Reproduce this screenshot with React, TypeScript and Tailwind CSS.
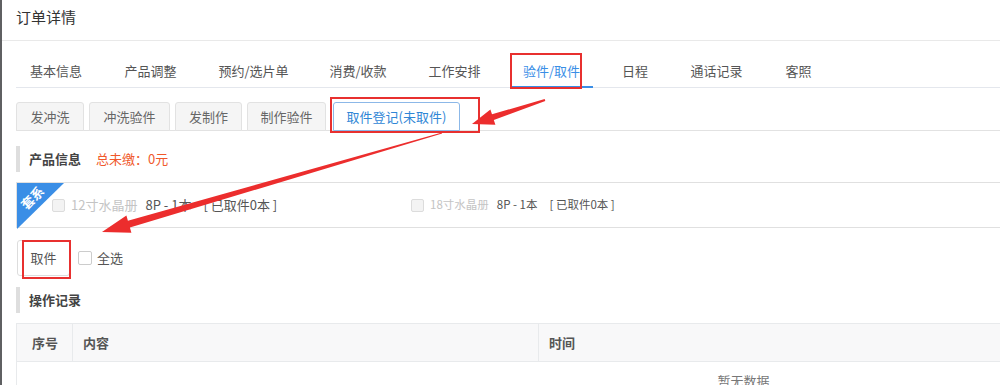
const mainTabs = [
  { label: "基本信息", w: "w-[78px]" },
  { label: "产品调整", w: "w-[79px]" },
  { label: "预约/选片单", w: "w-[95px]" },
  { label: "消费/收款", w: "w-[82px]" },
  { label: "工作安排", w: "w-[79px]" },
  { label: "验件/取件", w: "w-[83px]" },
  { label: "日程", w: "w-[52px]" },
  { label: "通话记录", w: "w-[79px]" },
  { label: "客照", w: "w-[53px]" },
];

const subTabs = [
  { label: "发冲洗", w: "w-[68px]" },
  { label: "冲洗验件", w: "w-[81px]" },
  { label: "发制作", w: "w-[67px]" },
  { label: "制作验件", w: "w-[79px]" },
];

function SectionTitle({ children }: { children: React.ReactNode }) {
  return (
    <div className="flex h-[26px] items-center gap-[15px] border-l-4 border-[#dedede] pl-[9px]">
      {children}
    </div>
  );
}

function ProductItem({ name, small }: { name: string; small?: boolean }) {
  return (
    <div
      className={`flex w-[359px] shrink-0 items-center ${small ? "text-[11.5px]" : "text-[13px]"}`}
    >
      <span className="h-[13px] w-[13px] rounded-[2px] border border-[#dcdcdc] bg-[#f3f3f3]" />
      <span className="ml-[6px] text-[#c4c4c4]">{name}</span>
      <span className="ml-[8px] text-[#555]">8P - 1本</span>
      <span className="ml-[12px] text-[#555]">[ 已取件0本 ]</span>
    </div>
  );
}

export default function App() {
  return (
    <div className="relative h-[385px] w-[1000px] overflow-hidden border-l-2 border-[#5f6062] bg-white font-['Noto_Sans_CJK_SC','Noto_Sans',sans-serif] text-[13px] text-[#555]">
      <div className="h-[41px] border-b border-[#e9e9e9] pl-[14px] pt-[7px] text-[15px] leading-[20px] text-[#333]">
        订单详情
      </div>

      <div className="pl-[14px]">
        {/* main tabs */}
        <div className="flex gap-[16px] border-b border-[#e4e7ed] pl-px pt-[14px]">
          {mainTabs.map((t) => (
            <div
              key={t.label}
              className={`-mb-px flex h-[33px] ${t.w} shrink-0 items-center justify-center border-b-2 ${
                t.label === "验件/取件" ? "border-[#3a8ee6] text-[#3a8ee6]" : "border-transparent"
              }`}
            >
              {t.label}
            </div>
          ))}
        </div>

        {/* sub tabs */}
        <div className="mt-[14px] flex items-end gap-[5px] border-b border-[#e2e2e2]">
          {subTabs.map((t) => (
            <div
              key={t.label}
              className={`-mb-px flex h-[29px] ${t.w} items-center justify-center rounded-t-[3px] border border-[#e2e2e2] bg-[#f5f5f5] text-[#666]`}
            >
              {t.label}
            </div>
          ))}
          <div className="-mb-px ml-[2px] flex h-[29px] w-[127px] items-center justify-center rounded-t-[3px] border border-[#8cb8e8] bg-white text-[#2f86d6]">
            取件登记(未取件)
          </div>
        </div>

        <div className="mt-[15px]">
          <SectionTitle>
            <span className="font-bold text-[#444]">产品信息</span>
            <span className="text-[#f0582b]">总未缴：0元</span>
          </SectionTitle>
        </div>

        {/* product box */}
        <div className="relative mt-[10px] flex h-[46px] items-center border border-r-0 border-[#e0e0e0] pl-[35px]">
          <div className="absolute left-0 top-0 h-[46px] w-[47px] bg-[#3a8ee6] [clip-path:polygon(0_0,100%_0,0_100%)]" />
          <span className="absolute left-[2px] top-[8px] -rotate-45 text-[13px] font-bold leading-none text-white">
            套系
          </span>
          <ProductItem name="12寸水晶册" />
          <ProductItem name="18寸水晶册" small />
        </div>

        {/* actions */}
        <div className="mt-[12px] flex items-center">
          <button className="ml-[1px] h-[36px] w-[53px] rounded-[3px] border border-[#dddddd] bg-white text-[13px] text-[#555]">
            取件
          </button>
          <span className="ml-[8px] h-[14px] w-[14px] rounded-[2px] border border-[#cccccc] bg-white" />
          <span className="ml-[5px] text-[#555]">全选</span>
        </div>

        <div className="mt-[11px]">
          <SectionTitle>
            <span className="font-bold text-[#444]">操作记录</span>
          </SectionTitle>
        </div>

        {/* log table */}
        <div className="mt-[10px] w-[1454px] border-l border-t border-[#e8eaec]">
          <div className="flex h-[37px] items-center bg-[#f8f8f9] font-bold text-[#555]">
            <div className="flex h-full w-[56px] items-center border-r border-[#e8eaec] pl-[15px]">序号</div>
            <div className="flex h-full w-[466px] items-center border-r border-[#e8eaec] pl-[10px]">内容</div>
            <div className="flex h-full flex-1 items-center pl-[10px]">时间</div>
          </div>
          <div className="border-t border-[#e8eaec] pt-[11px] text-center leading-[16px] text-[#777]">
            暂无数据
          </div>
        </div>
      </div>

      {/* annotations */}
      <div className="pointer-events-none absolute left-[508px] top-[53px] h-[36px] w-[72px] border-2 border-[#e8302f]" />
      <div className="pointer-events-none absolute left-[328px] top-[97px] h-[36px] w-[150px] border-2 border-[#e8302f]" />
      <div className="pointer-events-none absolute left-[20px] top-[240px] h-[39px] w-[49px] border-2 border-[#e8302f]" />
      <svg className="pointer-events-none absolute left-0 top-0" width="1000" height="385">
        <polygon
          fill="#ec2d2d"
          points="543.3,101 491.8,120 493.4,124.7 470,124 488.4,109.5 490,114.3 542.7,99"
        />
        <polygon
          fill="#ec2d2d"
          points="440.1,133.5 127.9,227.6 129.4,232.8 100,232 124.4,215.6 125.9,220.8 439.9,132.5"
        />
      </svg>
    </div>
  );
}
